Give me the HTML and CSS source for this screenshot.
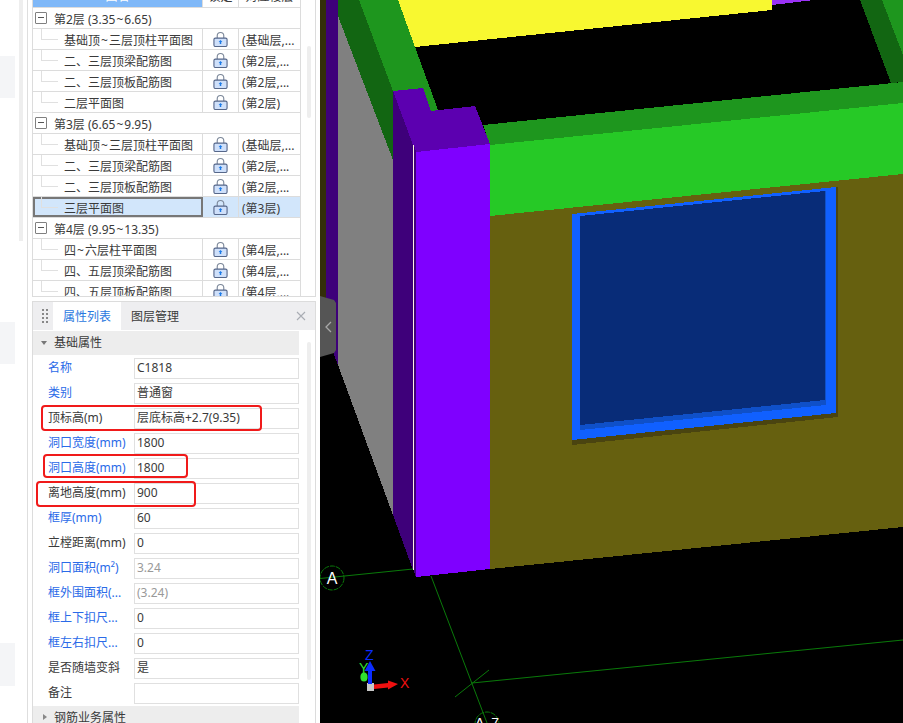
FILE: index.html
```html
<!DOCTYPE html>
<html lang="zh-CN">
<head>
<meta charset="utf-8">
<title>属性列表</title>
<link rel="stylesheet" href="styles.css">
</head>
<body>
<svg width="0" height="0" class="defs" aria-hidden="true">
  <symbol id="lock" viewBox="0 0 16 17">
    <path d="M4.5 8V5a3.5 3.5 0 0 1 7 0v3" fill="none" stroke="#7b8799" stroke-width="1.2"/>
    <rect x="1" y="7.5" width="14" height="9" rx="1.5" fill="#cfe0fa" stroke="#56678a" stroke-width="1.2"/>
    <path d="M8 9.6l2 2.2H8.8v2H7.2v-2H6z" fill="#1b7ae8"/>
  </symbol>
</svg>
<div class="app">
  <aside class="gutter">
    <div class="gutter-blocks">
      <div class="block block-a"></div>
      <div class="block block-b"></div>
      <div class="block block-c"></div>
    </div>
    <div class="gutter-bar"></div>
  </aside>
  <main class="side">
    <section class="tree-panel">
      <div class="tree">
        <div class="row head"><div class="c name-head">图名</div><div class="c lock-head">锁定</div><div class="c floor-head">对应楼层</div></div>

        <div class="group"><span class="minus"></span><span class="group-text">第2层 (3.35<span class="tilde">~</span>6.65)</span></div>
        <div class="row"><div class="c name">基础顶<span class="tilde">~</span>三层顶柱平面图</div><div class="c"><svg class="lock"><use href="#lock"/></svg></div><div class="c floor">(基础层,...</div></div>
        <div class="row"><div class="c name">二、三层顶梁配筋图</div><div class="c"><svg class="lock"><use href="#lock"/></svg></div><div class="c floor">(第2层,...</div></div>
        <div class="row"><div class="c name">二、三层顶板配筋图</div><div class="c"><svg class="lock"><use href="#lock"/></svg></div><div class="c floor">(第2层,...</div></div>
        <div class="row"><div class="c name last">二层平面图</div><div class="c"><svg class="lock"><use href="#lock"/></svg></div><div class="c floor">(第2层)</div></div>

        <div class="group"><span class="minus"></span><span class="group-text">第3层 (6.65<span class="tilde">~</span>9.95)</span></div>
        <div class="row"><div class="c name">基础顶<span class="tilde">~</span>三层顶柱平面图</div><div class="c"><svg class="lock"><use href="#lock"/></svg></div><div class="c floor">(基础层,...</div></div>
        <div class="row"><div class="c name">二、三层顶梁配筋图</div><div class="c"><svg class="lock"><use href="#lock"/></svg></div><div class="c floor">(第2层,...</div></div>
        <div class="row"><div class="c name">二、三层顶板配筋图</div><div class="c"><svg class="lock"><use href="#lock"/></svg></div><div class="c floor">(第2层,...</div></div>
        <div class="row selected"><div class="c name last">三层平面图</div><div class="c"><svg class="lock"><use href="#lock"/></svg></div><div class="c floor">(第3层)</div></div>

        <div class="group"><span class="minus"></span><span class="group-text">第4层 (9.95<span class="tilde">~</span>13.35)</span></div>
        <div class="row"><div class="c name">四<span class="tilde">~</span>六层柱平面图</div><div class="c"><svg class="lock"><use href="#lock"/></svg></div><div class="c floor">(第4层,...</div></div>
        <div class="row"><div class="c name">四、五层顶梁配筋图</div><div class="c"><svg class="lock"><use href="#lock"/></svg></div><div class="c floor">(第4层,...</div></div>
        <div class="row"><div class="c name">四、五层顶板配筋图</div><div class="c"><svg class="lock"><use href="#lock"/></svg></div><div class="c floor">(第4层,...</div></div>
      </div>
      <div class="bar tree-bar"></div>
    </section>

    <section class="props">
      <header class="tabs">
        <span class="grip"></span>
        <span class="tab active">属性列表</span>
        <span class="tab">图层管理</span>
        <svg class="close" viewBox="0 0 10 10"><path d="M1 1l8 8M9 1l-8 8" stroke="#a9adb3" stroke-width="1.1" fill="none"/></svg>
      </header>
      <div class="props-body">
        <div class="list">
          <div class="sec"><span class="tri down"></span>基础属性</div>
          <div class="prop"><span class="lbl blue">名称</span><span class="val">C1818</span></div>
          <div class="prop"><span class="lbl blue">类别</span><span class="val">普通窗</span></div>
          <div class="prop"><span class="lbl">顶标高(m)</span><span class="val">层底标高+2.7(9.35)</span></div>
          <div class="prop"><span class="lbl blue">洞口宽度(mm)</span><span class="val">1800</span></div>
          <div class="prop"><span class="lbl blue">洞口高度(mm)</span><span class="val">1800</span></div>
          <div class="prop"><span class="lbl">离地高度(mm)</span><span class="val">900</span></div>
          <div class="prop"><span class="lbl blue">框厚(mm)</span><span class="val">60</span></div>
          <div class="prop"><span class="lbl">立樘距离(mm)</span><span class="val">0</span></div>
          <div class="prop"><span class="lbl blue">洞口面积(m²)</span><span class="val muted">3.24</span></div>
          <div class="prop"><span class="lbl blue">框外围面积(...</span><span class="val muted">(3.24)</span></div>
          <div class="prop"><span class="lbl blue">框上下扣尺...</span><span class="val">0</span></div>
          <div class="prop"><span class="lbl blue">框左右扣尺...</span><span class="val">0</span></div>
          <div class="prop"><span class="lbl">是否随墙变斜</span><span class="val">是</span></div>
          <div class="prop"><span class="lbl">备注</span><span class="val"></span></div>
          <div class="sec sec-b"><span class="tri right"></span>钢筋业务属性</div>
        </div>
        <div class="bar props-bar"></div>
      </div>
      <div class="mark mark-a"></div>
      <div class="mark mark-b"></div>
      <div class="mark mark-c"></div>
    </section>
  </main>
  <svg class="scene" viewBox="320 0 583 723" width="583" height="723" shape-rendering="crispEdges">
    <rect x="320" y="0" width="583" height="723" fill="#000"/>
    <rect x="320" y="0" width="6" height="300" fill="#332e0a"/>
    <polygon points="326,0 338,0 338,365 333,352 326,352" fill="#3e007a"/>
    <polygon points="338,16 393,160 393,515 338,365" fill="#808080"/>
    <polygon points="338,0 359,0 393,91 393,160 338,16" fill="#126612"/>
    <polygon points="359,0 398,0 415,47 438,110 431,111 423,88 393,91" fill="#1e961e"/>
    <polygon points="398,0 772,0 772,10 415,47" fill="#f8f830"/>
    <polygon points="772,0 814,0 772,5" fill="#9a32f5"/>
    <polygon points="860,0 882,0 903,55 903,82 891,83" fill="#126612"/>
    <polygon points="882,0 903,0 903,55" fill="#1e961e"/>
    <polygon points="483,125 903,82 903,103 490,145" fill="#1e961e"/>
    <polygon points="490,145 903,103 903,174 490,216" fill="#26c926"/>
    <polygon points="490,216 903,174 903,527 490,569" fill="#66600f"/>
    <polygon points="572,440 836,413 836,187 838,187 838,417 572,445" fill="#4a4410"/>
    <polygon points="572,214 836,187 836,413 572,440" fill="#1060ff"/>
    <polygon points="580,216 825,191 825,400 580,425" fill="#082c78"/>
    <polygon points="580,425 825,400 826,400 826,405 580,430" fill="#0f50c8"/>
    <rect x="825" y="191" width="1" height="209" fill="#0f50c8"/>
    <polygon points="393,91 413,145 413,570 393,515" fill="#3e007a"/>
    <polygon points="393,91 423,88 431,111 475,106 490,144 416,152 413,145" fill="#5c00b0"/>
    <polygon points="414,145 416,152 416,577 414,572" fill="#3e007a"/>
    <polygon points="416,152 490,144 490,569 416,577" fill="#7f00ff"/>
    <rect x="413" y="145" width="1" height="425" fill="#fff2e0"/>
    <g fill="none" stroke="#0a7a0a" stroke-width="1" shape-rendering="auto">
      <path d="M320 578.5L413 569"/>
      <path d="M431 576L487 723"/>
      <path d="M455 697L489 670"/>
      <path d="M472 683L903 640"/>
      <circle cx="332" cy="578" r="12" stroke-dasharray="5 1"/>
      <circle cx="487" cy="724" r="12" stroke-dasharray="5 1"/>
    </g>
    <text x="332" y="584" class="grid-label" text-anchor="middle">A</text>
    <text x="487" y="728" class="grid-label small" text-anchor="middle">A 7</text>
    <g shape-rendering="auto">
      <ellipse cx="364" cy="677" rx="3.6" ry="4.5" fill="#30e030"/>
      <rect x="367" y="683" width="7" height="8" fill="#c8c8c8"/>
      <rect x="368" y="668" width="4" height="16" fill="#0a2cff"/>
      <polygon points="370,661 375.500,671 364.500,671" fill="#0a2cff"/>
      <polygon points="374,684.500 388,683 388,680.500 398,684 388,689.500 388,687.500 374,689" fill="#f01010"/>
      <text x="365" y="660" class="axis z">Z</text>
      <text x="359" y="673" class="axis y">Y</text>
      <text x="400" y="688" class="axis x">X</text>
    </g>
    <polygon points="320,296 334,300 336,303 336,350 334,353 320,357" fill="#555" shape-rendering="auto"/>
    <path d="M331 322l-5 5 5 5" fill="none" stroke="#a8a8a8" stroke-width="1.3" shape-rendering="auto"/>
  </svg>
</div>
</body>
</html>
```
FILE: styles.css
```css
* { box-sizing: border-box; }
html, body { margin: 0; height: 723px; overflow: hidden; background: #fff; }
body { font: 12px/20px "Noto Sans", "Noto Sans CJK SC", sans-serif; color: #3a3a3a; }
.defs { position: absolute; }
.app { display: flex; width: 903px; height: 723px; overflow: hidden; }

.gutter { width: 28px; flex: none; display: flex; border-right: 1px solid #dedede; }
.gutter-blocks { width: 15px; margin-right: 4px; }
.block { height: 42px; background: #f4f5f7; }
.block-a { margin-top: 56px; }
.block-b { margin-top: 224px; }
.block-c { margin-top: 279px; height: 43px; }
.gutter-bar { width: 4px; height: 241px; background: #eeeeee; }

.side { width: 292px; flex: none; padding-left: 4px; }

.tree-panel { width: 284px; height: 297px; border: 1px solid #dcdcdc; border-width: 0 1px 1px 1px; display: flex; overflow: hidden; }
.tree { width: 268px; flex: none; margin-top: -13px; border-right: 1px solid #dcdcdc; }
.bar { width: 4px; background: #eeeeee; border-radius: 2px; }
.tree-bar { height: 72px; margin: 46px 0 0 6px; flex: none; }

.row { display: grid; grid-template-columns: 170px 36px 1fr; height: 21px; border-bottom: 1px solid #dcdcdc; }
.c { border-right: 1px solid #dcdcdc; line-height: 20px; white-space: nowrap; overflow: hidden; display: flex; align-items: center; justify-content: center; }
.c:last-child { border-right: 0; }
.head .name-head { background: #7fb8f8; color: #fff; }
.group { height: 21px; border-bottom: 1px solid #dcdcdc; display: flex; align-items: center; padding-left: 2px; gap: 7px; }
.group-text { padding-top: 3px; }
.tilde { margin: 0 1px; }
.minus { width: 12px; height: 12px; border: 1px solid #808080; border-radius: 1px; position: relative; flex: none; background: #fff; }
.minus::after { content: ""; position: absolute; left: 2px; right: 2px; top: 4px; height: 1px; background: #555; }
.name { justify-content: flex-start; align-items: flex-start; line-height: 24px; padding-left: 31px; position: relative; }
.name::before { content: ""; position: absolute; left: 8px; top: -1px; bottom: 9px; width: 8px; border-left: 1px solid #e0e0e0; }
.name::after { content: ""; position: absolute; left: 9px; top: 10px; width: 16px; height: 1px; background: #e0e0e0; }
.floor { justify-content: flex-start; align-items: flex-start; line-height: 24px; padding-left: 3px; }
.lock { width: 15px; height: 16px; }
.selected { background: #d2e6fb; }
.selected .name { box-shadow: inset 0 0 0 2px #777; border-right: 0; padding-left: 31px; }

.props { position: relative; width: 284px; height: 440px; margin-top: 4px; border: 1px solid #dcdcdc; border-bottom: 0; }
.tabs { height: 28px; background: #eeeef0; display: flex; align-items: stretch; position: relative; }
.grip { width: 6px; height: 14px; margin: 7px 0 0 9px; flex: none; background-image: radial-gradient(circle at 1.2px 1.2px, #888 1.2px, transparent 1.3px); background-size: 4px 4px; }
.tab { width: 68px; padding-left: 10px; line-height: 29px; color: #3a3a3a; flex: none; }
.tab:nth-child(2) { margin-left: 5px; }
.tab.active { background: #fff; color: #2a78e0; }
.close { width: 10px; height: 10px; position: absolute; right: 9px; top: 9px; }
.props-body { display: flex; }
.list { width: 266px; flex: none; }
.bar.props-bar { width: 4px; height: 338px; margin: 12px 0 0 8px; flex: none; }
.sec { height: 24px; background: #ededed; margin-top: 1px; line-height: 24px; padding-left: 21px; position: relative; }
.sec-b { margin-top: 2px; height: 24px; }
.tri { position: absolute; left: 8px; width: 0; height: 0; }
.tri.down { top: 10px; border: 3px solid transparent; border-top: 4px solid #777; border-bottom: 0; }
.tri.right { top: 8px; left: 10px; border: 3.500px solid transparent; border-left: 4px solid #888; border-right: 0; }
.prop { display: flex; height: 21px; margin-top: 4px; }
.sec + .prop { margin-top: 3px; }
.lbl { width: 101px; flex: none; padding-left: 15px; line-height: 20px; white-space: nowrap; }
.blue { color: #2a6ae8; }
.val { width: 165px; flex: none; border: 1px solid #e0e0e0; padding-left: 2px; line-height: 18px; }
.muted { color: #999; }

.mark { position: absolute; border: 2.500px solid #f01a1a; border-radius: 4px; }
.mark-a { left: 8px; top: 103px; width: 221px; height: 26px; }
.mark-b { left: 10px; top: 152px; width: 145px; height: 24px; }
.mark-c { left: 3px; top: 179px; width: 160px; height: 26px; }

.scene { display: block; flex: none; }
.grid-label { font: 16px "Liberation Sans", sans-serif; fill: #fff; }
.grid-label.small { font-size: 14px; word-spacing: 4px; }
.axis { font: 14px "Liberation Sans", sans-serif; }
.axis.z { fill: #0a2cff; }
.axis.y { fill: #30e030; }
.axis.x { fill: #f01010; }
```
